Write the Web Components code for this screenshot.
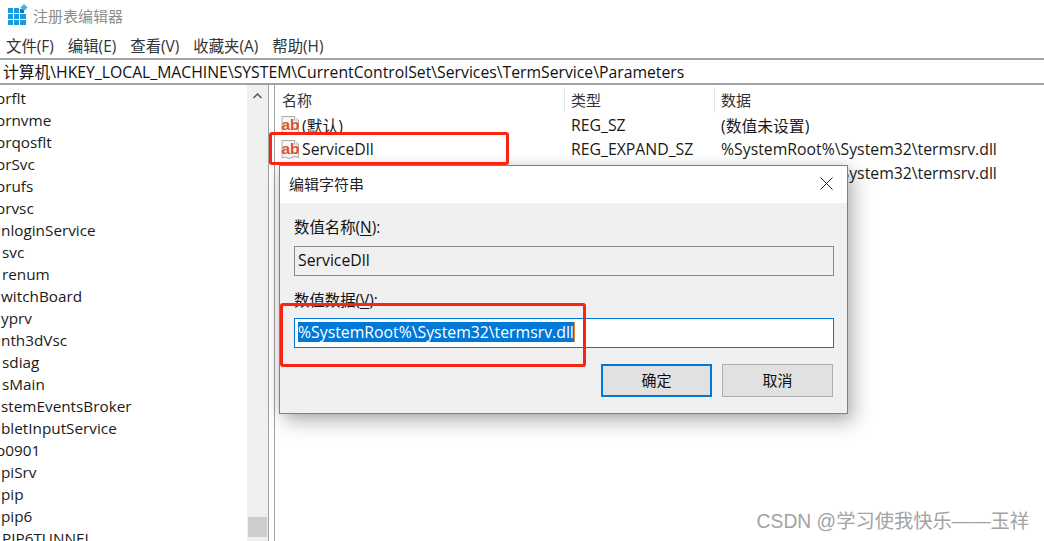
<!DOCTYPE html>
<html lang="zh">
<head>
<meta charset="utf-8">
<title>注册表编辑器</title>
<style>
  html, body { margin: 0; height: 100%; background: #fff; overflow: hidden; }
  body { font: 15px "Open Sans", "Noto Sans CJK SC", sans-serif; color: #1a1a1a; }
</style>
</head>
<body>
<reg-window>
  <title-bar slot="top">注册表编辑器</title-bar>
  <menu-bar slot="top"></menu-bar>
  <address-bar slot="top">计算机\HKEY_LOCAL_MACHINE\SYSTEM\CurrentControlSet\Services\TermService\Parameters</address-bar>
  <key-tree slot="left"></key-tree>
  <value-list slot="right">
    <value-row name="(默认)" type="REG_SZ" data="(数值未设置)"></value-row>
    <value-row name="ServiceDll" type="REG_EXPAND_SZ" data="%SystemRoot%\System32\termsrv.dll"></value-row>
    <value-row name="" type="" data="%SystemRoot%\System32\termsrv.dll"></value-row>
  </value-list>
  <edit-dialog></edit-dialog>
  <mark-box style="left:269px;top:132px;width:240px;height:33px"></mark-box>
  <mark-box style="left:280px;top:303px;width:306px;height:64px"></mark-box>
  <water-mark>CSDN @学习使我快乐——玉祥</water-mark>
</reg-window>

<script>
// Makes the open shadow root from a string
function shadow(el, html) {
  el.attachShadow({ mode: 'open' }).innerHTML = html
}

const AB_ICON = `
  <svg width="20" height="21" viewBox="0 0 20 21" style="display:block;flex:none">
    <path d="M2 1.5H14.5L18.5 5V18.5L14 17.5L9 19.5L5 18L2 19Z" fill="#f6f6f6" stroke="#acacac"/>
    <path d="M14.5 1.5V5H18.5" fill="#fff" stroke="#b5b5b5"/>
    <text x="1.5" y="14.5" font-family="Liberation Sans" font-weight="700" font-size="15.5" fill="#de4f2e">ab</text>
  </svg>`

class RegWindow extends HTMLElement {
  constructor() {
    super()
    shadow(this, `
      <style>
        :host { display: flex; flex-direction: column; position: relative; width: 1044px; height: 541px; overflow: hidden; background: #fff; }
        .panes { flex: 1; min-height: 0; display: flex; }
      </style>
      <slot name="top"></slot>
      <div class="panes">
        <slot name="left"></slot>
        <slot name="right"></slot>
      </div>
      <slot></slot>`)
  }
}

class TitleBar extends HTMLElement {
  constructor() {
    super()
    shadow(this, `
      <style>
        :host { display: flex; align-items: center; gap: 5px; height: 32px; padding: 0 0 1px 8px; box-sizing: border-box; color: #8c8c8c; font-size: 15px; }
        svg { display: block; margin-top: -2px; }
      </style>
      <svg width="20" height="21" viewBox="0 0 20 21">
        <path d="M0 4h5v5H0zM6 4h5v5H6zM0 10h5v5H0zM6 10h5v5H6zM12 10h6v5h-6zM0 16h5v5H0zM6 16h5v5H6zM12 16h6v5h-6z" fill="#1d9ade"/>
        <path d="M12 5h4v4h-4z" fill="#1272b8"/>
        <path d="M16 0l3.5 3.5L16 7l-3.5-3.5z" fill="#46aee3"/>
      </svg>
      <slot></slot>`)
  }
}

class MenuBar extends HTMLElement {
  constructor() {
    super()
    const items = ['文件(F)', '编辑(E)', '查看(V)', '收藏夹(A)', '帮助(H)']
    shadow(this, `
      <style>
        :host { display: flex; gap: 14px; height: 26px; padding: 0 0 0 6px; box-sizing: border-box; align-items: center; font-size: 15.4px; color: #333; }
      </style>
      ${items.map(t => `<span>${t}</span>`).join('')}`)
  }
}

class AddressBar extends HTMLElement {
  constructor() {
    super()
    shadow(this, `
      <style>
        :host { display: flex; align-items: center; height: 27px; padding: 0 0 1px 3px; box-sizing: border-box; border-top: 2px solid #a2a2a2; border-bottom: 2px solid #a2a2a2; font-size: 15.75px; white-space: nowrap; overflow: hidden; color: #111; }
      </style>
      <slot></slot>`)
  }
}

class KeyTree extends HTMLElement {
  constructor() {
    super()
    // second value: how far the name is pushed under the left edge of the pane
    const keys = [['orflt', 6], ['ornvme', 6], ['orqosflt', 6], ['orSvc', 6], ['orufs', 6], ['orvsc', 6], ['nloginService', 1], ['svc', 0], ['renum', 0],
      ['witchBoard', 1], ['yprv', 1], ['nth3dVsc', 1], ['sdiag', 0], ['sMain', 0], ['stemEventsBroker', 1], ['bletInputService', 1], ['o0901', 6],
      ['piSrv', 1], ['pip', 1], ['pip6', 1], ['PIP6TUNNEL', 0]]
    shadow(this, `
      <style>
        :host { display: flex; flex: none; width: 269px; box-sizing: border-box; border-right: 1px solid #a0a0a0; overflow: hidden; }
        ul { flex: 1; min-width: 0; margin: 0; padding: 2px 0 0; list-style: none; overflow: hidden; }
        li { height: 22px; line-height: 22px; padding-left: 2px; font-size: 15.3px; white-space: nowrap; }
        .bar { flex: none; width: 21px; background: #f0f0f0; display: flex; flex-direction: column; justify-content: space-between; align-items: center; padding: 8px 0 4px; box-sizing: border-box; }
        .thumb { width: 19px; height: 20px; background: #cdcdcd; }
      </style>
      <ul>${keys.map(k => `<li style="text-indent:${-k[1]}px">${k[0]}</li>`).join('')}</ul>
      <div class="bar">
        <svg width="9" height="6" viewBox="0 0 9 6"><path d="M.5 5L4.5 1L8.5 5" fill="none" stroke="#555" stroke-width="1.5"/></svg>
        <div class="thumb"></div>
      </div>`)
  }
}

class ValueList extends HTMLElement {
  constructor() {
    super()
    shadow(this, `
      <style>
        :host { display: block; flex: 1; margin-left: 5px; border-left: 1px solid #a0a0a0; min-width: 0; }
        .head { display: grid; grid-template-columns: 290px 150px 1fr; height: 26px; margin-top: 2px; font-size: 15px; color: #333; }
        .head span { padding-left: 7px; line-height: 26px; border-right: 1px solid #e5e5e5; }
        .head span + span { padding-left: 6px; }
        .head span:last-child { border: 0; }
      </style>
      <div class="head"><span>名称</span><span>类型</span><span>数据</span></div>
      <slot></slot>`)
  }
}

class ValueRow extends HTMLElement {
  constructor() {
    super()
    shadow(this, `
      <style>
        :host { display: grid; grid-template-columns: 290px 150px 1fr; height: 24px; align-items: center; font-size: 15.8px; white-space: nowrap; }
        .name { display: flex; align-items: center; gap: 2px; padding-left: 5px; }
        .type, .data { padding-left: 6px; }
      </style>
      <div class="name">${AB_ICON}<span>${this.getAttribute('name')}</span></div>
      <div class="type">${this.getAttribute('type')}</div>
      <div class="data">${this.getAttribute('data')}</div>`)
  }
}

class PushButton extends HTMLElement {
  constructor() {
    super()
    shadow(this, `
      <style>
        :host { display: flex; align-items: center; justify-content: center; width: 111px; height: 33px; padding-bottom: 2px; box-sizing: border-box; background: #e1e1e1; border: 1px solid #adadad; font-size: 15px; color: #111; }
        :host([primary]) { border: 2px solid #0078d7; }
      </style>
      <slot></slot>`)
  }
}

class EditDialog extends HTMLElement {
  constructor() {
    super()
    shadow(this, `
      <style>
        :host { position: absolute; left: 279px; top: 165px; width: 569px; height: 249px; box-sizing: border-box; display: flex; flex-direction: column; background: #f0f0f0; border: 1px solid #7f7f7f; box-shadow: 6px 8px 18px rgba(0,0,0,.28), -2px 0 10px rgba(0,0,0,.1); }
        .title { display: flex; align-items: center; justify-content: space-between; flex: none; height: 37px; box-sizing: border-box; padding: 0 14px 2px 9px; background: #fff; font-size: 15px; color: #222; }
        .body { flex: 1; display: flex; flex-direction: column; padding: 0 13px 0 14px; font-size: 15.4px; color: #111; }
        label { display: block; height: 20px; line-height: 20px; margin-top: 15px; }
        u { text-underline-offset: 2px; }
        .field { flex: none; height: 30px; box-sizing: border-box; padding: 0 3px 2px; display: flex; align-items: center; font-size: 15.8px; white-space: nowrap; }
        .ro { margin-top: 8px; background: #f0f0f0; border: 1px solid #8a8a8a; }
        .rw { margin-top: 7px; background: #fff; border: 1px solid #0078d7; }
        .rw span { background: #0078d7; color: #fff; line-height: 20px; border-right: 1px solid #e08a2c; }
        .buttons { display: flex; justify-content: flex-end; gap: 10px; padding-right: 1px; margin-top: 16px; }
      </style>
      <div class="title">
        <span>编辑字符串</span>
        <svg width="13" height="13" viewBox="0 0 13 13"><path d="M.5.5L12.5 12.5M12.5.5L.5 12.5" stroke="#222" fill="none"/></svg>
      </div>
      <div class="body">
        <label>数值名称(<u>N</u>):</label>
        <div class="field ro">ServiceDll</div>
        <label>数值数据(<u>V</u>):</label>
        <div class="field rw"><span>%SystemRoot%\\System32\\termsrv.dll</span></div>
        <div class="buttons">
          <push-button primary>确定</push-button>
          <push-button>取消</push-button>
        </div>
      </div>`)
  }
}

class MarkBox extends HTMLElement {
  constructor() {
    super()
    shadow(this, `
      <style>
        :host { position: absolute; box-sizing: border-box; border: 3px solid #fa2413; border-radius: 3px; }
      </style>`)
  }
}

class WaterMark extends HTMLElement {
  constructor() {
    super()
    shadow(this, `
      <style>
        :host { position: absolute; right: 15px; top: 506px; font: 19.3px "Liberation Sans", "Noto Sans CJK SC", sans-serif; color: #a3a3a3; white-space: nowrap; }
      </style>
      <slot></slot>`)
  }
}

customElements.define('reg-window', RegWindow)
customElements.define('title-bar', TitleBar)
customElements.define('menu-bar', MenuBar)
customElements.define('address-bar', AddressBar)
customElements.define('key-tree', KeyTree)
customElements.define('value-list', ValueList)
customElements.define('value-row', ValueRow)
customElements.define('push-button', PushButton)
customElements.define('edit-dialog', EditDialog)
customElements.define('mark-box', MarkBox)
customElements.define('water-mark', WaterMark)
</script>
</body>
</html>
